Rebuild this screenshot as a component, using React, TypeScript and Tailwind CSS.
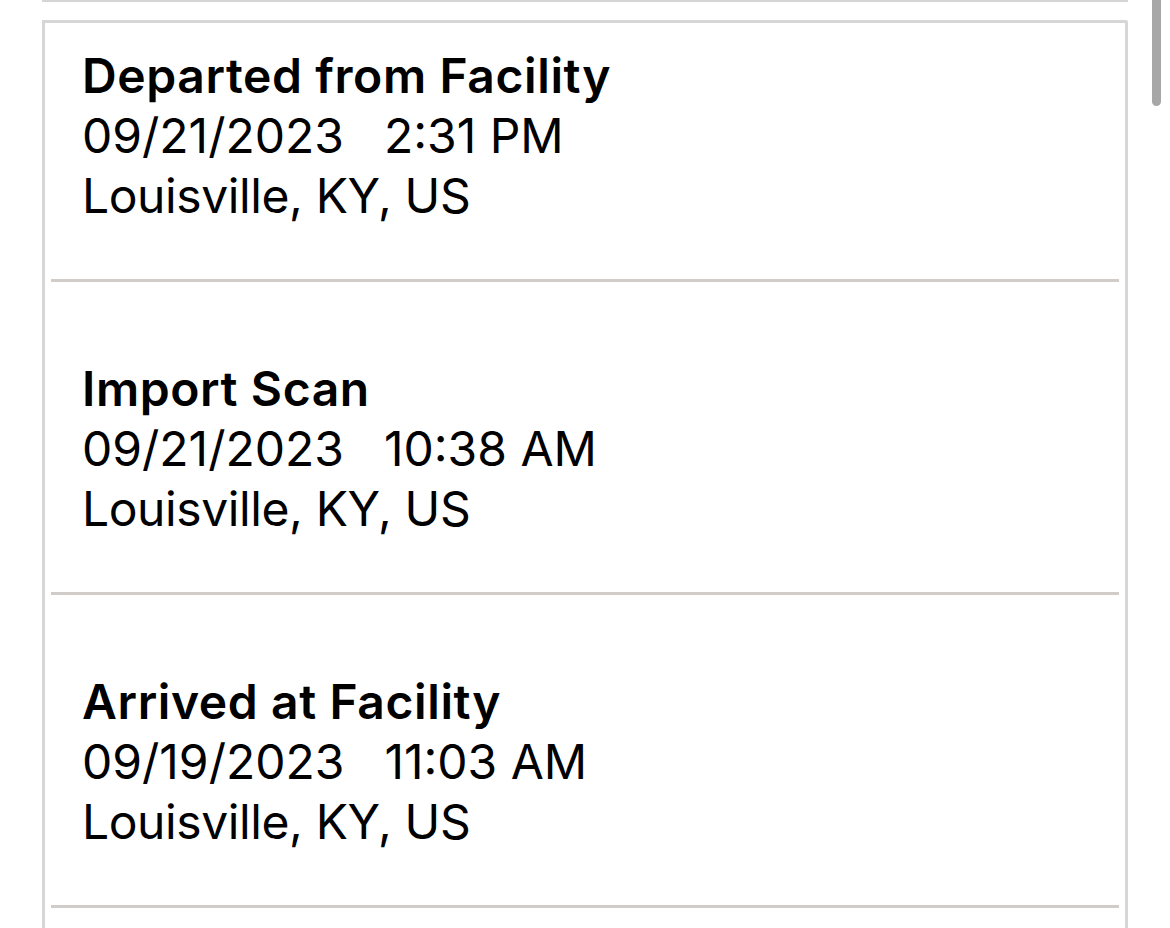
import React from 'react';

interface ScanEvent {
    status: string;
    date: string;
    time: string;
    location: string;
}

const events: ScanEvent[] = [
    { status: 'Departed from Facility', date: '09/21/2023', time: '2:31 PM', location: 'Louisville, KY, US' },
    { status: 'Import Scan', date: '09/21/2023', time: '10:38 AM', location: 'Louisville, KY, US' },
    { status: 'Arrived at Facility', date: '09/19/2023', time: '11:03 AM', location: 'Louisville, KY, US' },
];

export default function App() {
    return (
        <div
            className="relative h-[928px] w-[1170px] overflow-hidden bg-white text-black"
            style={{ fontFamily: 'Inter, "Noto Sans", sans-serif' }}
        >
            {/* bottom edge of the previous card */}
            <div className="ml-[42px] h-[2px] w-[1086px] bg-[#d5d5d5]" />

            <div className="ml-[42px] mt-[18px] w-[1086px] rounded-tr-[3px] border-[3px] border-b-0 border-[#d6d6d6] pb-[40px]">
                {events.map((ev, i) => (
                    <div key={i}>
                        <div className={`pl-[37px] pb-[53px] ${i === 0 ? 'pt-[23px]' : 'pt-[77px]'}`}>
                            <div className="text-[48px] font-semibold leading-[60px] tracking-[0.6px]">
                                {ev.status}
                            </div>
                            <div className="flex gap-[40px] text-[48px] leading-[60px]">
                                <span>{ev.date}</span>
                                <span>{ev.time}</span>
                            </div>
                            <div className="text-[48px] leading-[60px] tracking-[-0.4px]">{ev.location}</div>
                        </div>
                        <div className="mx-[6px] h-[3px] bg-[#d1ccc8]" />
                    </div>
                ))}
            </div>

            {/* scroll indicator */}
            <div className="absolute right-[9px] top-[-10px] h-[116px] w-[9px] rounded-full bg-[#a7a7a7]" />
        </div>
    );
}
